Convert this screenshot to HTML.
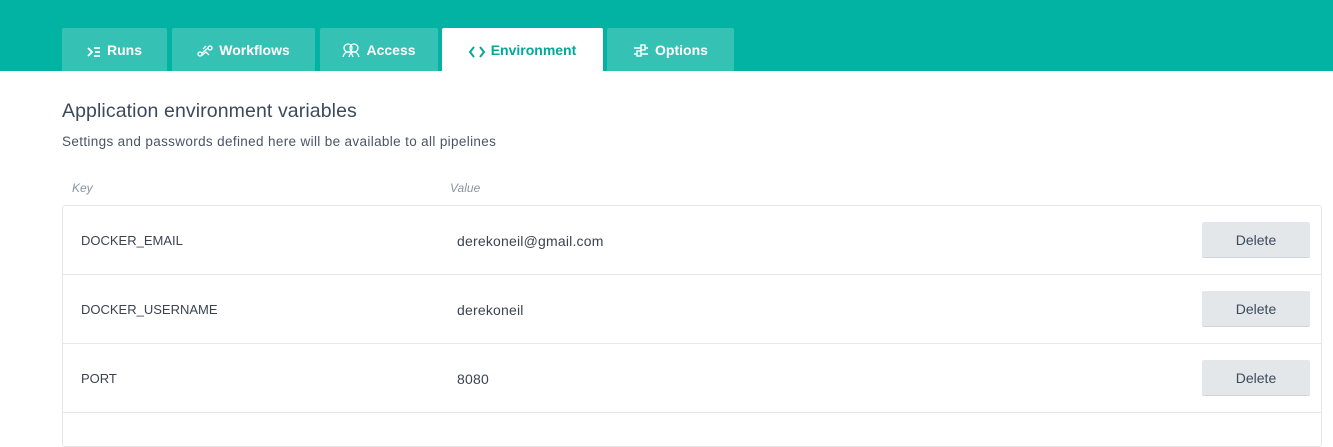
<!DOCTYPE html><html><head><style>
body{margin:0;width:1333px;height:414px;overflow:hidden;background:#fff;font-family:"Liberation Sans",sans-serif;position:relative}
.top{position:absolute;left:0;top:0;width:1333px;height:71px;background:#02b2a2;}
.tab{position:absolute;top:28px;height:43px;background:#35c1b4;border-radius:2px 2px 0 0;color:#fff;font-size:14px;font-weight:bold;line-height:44px;text-align:center;}
.tab svg{vertical-align:-3px;margin-right:6px}
.tab.act{background:#fff;color:#02a898}
h1{position:absolute;left:62px;top:100px;margin:0;font-size:19.5px;font-weight:normal;color:#3c4a5c;letter-spacing:0.1px}
.sub{position:absolute;left:62px;top:134px;font-size:13.5px;color:#4a5566;letter-spacing:0.35px}
.lh{position:absolute;top:181px;font-size:12px;font-style:italic;color:#8a94a0}
.box{position:absolute;left:62px;top:205px;width:1258px;height:240px;border:1px solid #e4e6e8;border-radius:3px}
.row{position:absolute;left:0;width:1258px;height:68px;border-bottom:1px solid #e4e6e8;font-size:13px;color:#3c4350}
.k{position:absolute;left:18px;top:27px}.v{position:absolute;left:394px;top:27px;font-size:14px;letter-spacing:0.2px}
.btn{position:absolute;left:1139px;top:16px;width:108px;height:35px;background:#e4e7ea;border-bottom:1px solid #d0d4d8;border-radius:2px;text-align:center;line-height:36px;font-size:14px;color:#3c4a5c}
</style></head><body>
<div class="top"></div>
<div class="tab" style="left:62px;width:105px"><svg width="14" height="12" viewBox="0 0 14 12" fill="none" stroke="#fff" stroke-width="1.8"><path d="M1 2l4 4-4 4M7 2h6M8 6h5M7 10h6"/></svg>Runs</div>
<div class="tab" style="left:172px;width:143px"><svg width="16" height="14" viewBox="0 0 16 14" fill="none" stroke="#fff" stroke-width="1.3"><circle cx="3" cy="10" r="2"/><circle cx="13" cy="4" r="2"/><path d="M5 9l6-5M4 12l5-4 3 3M9 2l-3 3"/></svg>Workflows</div>
<div class="tab" style="left:320px;width:118px"><svg width="18" height="16" viewBox="0 0 18 16" fill="none" stroke="#fff" stroke-width="1.3"><circle cx="6" cy="6" r="4"/><circle cx="12" cy="6" r="4"/><path d="M1 15c1-4 3-5 5-5s4 1 5 5M7 15c1-4 3-5 5-5s4 1 5 5"/></svg>Access</div>
<div class="tab act" style="left:442px;width:161px"><svg width="16" height="12" viewBox="0 0 16 12" fill="none" stroke="#02a898" stroke-width="2"><path d="M5 1L1 6l4 5M11 1l4 5-4 5"/></svg>Environment</div>
<div class="tab" style="left:607px;width:127px"><svg width="16" height="14" viewBox="0 0 16 14" fill="none" stroke="#fff" stroke-width="1.4"><path d="M1 4h14M1 10h14"/><rect x="8" y="1" width="4" height="5" fill="#35c1b4"/><rect x="4" y="7" width="4" height="5" fill="#35c1b4"/></svg>Options</div>
<h1>Application environment variables</h1>
<div class="sub">Settings and passwords defined here will be available to all pipelines</div>
<div class="lh" style="left:72px">Key</div><div class="lh" style="left:450px">Value</div>
<div class="box">
<div class="row" style="top:0"><span class="k">DOCKER_EMAIL</span><span class="v">derekoneil@gmail.com</span><div class="btn">Delete</div></div>
<div class="row" style="top:69px"><span class="k">DOCKER_USERNAME</span><span class="v">derekoneil</span><div class="btn">Delete</div></div>
<div class="row" style="top:138px"><span class="k">PORT</span><span class="v">8080</span><div class="btn">Delete</div></div>
</div>
</body></html>
